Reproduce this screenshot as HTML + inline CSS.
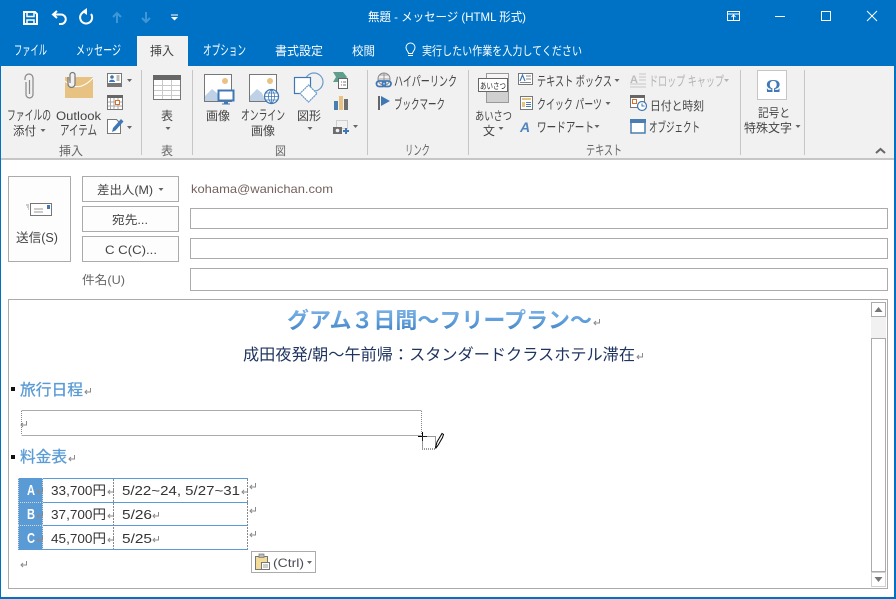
<!DOCTYPE html>
<html lang="ja"><head><meta charset="utf-8"><title>無題 - メッセージ (HTML 形式)</title>
<style>
html,body{margin:0;padding:0;background:#fff;overflow:hidden}
svg{display:block;position:absolute;left:0;top:0}
text{font-family:"Liberation Sans","Noto Sans CJK JP",sans-serif;font-size:12px;fill:#444;white-space:pre}
text.k{font-size:13.500px}
</style></head><body>
<svg width="896" height="599" viewBox="0 0 896 599" xmlns="http://www.w3.org/2000/svg">
<defs>
<g id="r"><path d="M6.500 0v4H1M3 2L1 4l2 2" fill="none" stroke="#8a8a8a" stroke-width="1"/></g>
<path id="a" d="M-2.500 0h5L0 3z" fill="#666"/>
<linearGradient id="tg" x1="0" y1="0" x2="0" y2="1"><stop offset="0" stop-color="#7fb3e4"/><stop offset=".5" stop-color="#5f9fdc"/><stop offset="1" stop-color="#3f7fc0"/></linearGradient>
</defs>
<rect width="896" height="599" fill="#0072c6"/>
<rect x="1" y="66" width="893" height="531" fill="#fff"/>
<rect x="1" y="66" width="893" height="92" fill="#f1f1f1"/>
<rect x="1" y="158" width="893" height="2" fill="#c6c6c6"/>
<rect x="137" y="36" width="51" height="30" fill="#f1f1f1"/>

<!-- QAT -->
<g fill="none" stroke="#fff">
<path d="M24 12h11l2 2v10H24z" stroke-width="2"/><path d="M27 12.500v4h7v-4M27 24v-4h7v4" stroke-width="1.500"/>
<path d="M57 11l-4 3.500 4 3.500" stroke-width="2"/><path d="M53.500 14.500H61a4.500 4.500 0 0 1 0 9.500h-2" stroke-width="2"/>
<path d="M91 14a6 6 0 1 1-5-2.500" stroke-width="2"/>
</g>
<path d="M87 8v7l-5-3.500z" fill="#fff"/>
<g fill="none" stroke="#3f96d6" stroke-width="2"><path d="M117 23V13M113 17l4-4 4 4M146 12v10M142 18l4 4 4-4"/></g>
<path d="M171 14.500h7v1h-7zM171 17h7l-3.500 3.500z" fill="#fff"/>

<text x="368" y="21" textLength="158" lengthAdjust="spacingAndGlyphs" style="fill:#fff">無題 - メッセージ (HTML 形式)</text>

<!-- window controls -->
<g fill="none" stroke="#fff">
<path d="M727.500 11.500h12v9h-12zM727.500 14h12M733.500 20v-5M731.500 17l2-2 2 2"/>
<path d="M775 16.500h10M821.500 11.500h9v9h-9zM867 11l10 10M877 11l-10 10"/>
</g>

<!-- tabs -->
<text class="k" style="fill:#fff" x="14" y="55" textLength="33" lengthAdjust="spacingAndGlyphs">ファイル</text>
<text class="k" style="fill:#fff" x="76" y="55" textLength="45" lengthAdjust="spacingAndGlyphs">メッセージ</text>
<text x="150" y="55" textLength="24" lengthAdjust="spacingAndGlyphs" style="fill:#444">挿入</text>
<text class="k" style="fill:#fff" x="203" y="55" textLength="43" lengthAdjust="spacingAndGlyphs">オプション</text>
<text style="fill:#fff" x="275" y="55" textLength="48" lengthAdjust="spacingAndGlyphs">書式設定</text>
<text style="fill:#fff" x="352" y="55" textLength="23" lengthAdjust="spacingAndGlyphs">校閲</text>
<text style="fill:#fff" x="422" y="55" textLength="160" lengthAdjust="spacingAndGlyphs">実行したい作業を入力してください</text>
<path d="M408 55.500h5M408.500 53.500c0-2-2.500-3-2.500-6a4.500 4.500 0 0 1 9 0c0 3-2.500 4-2.500 6z" fill="none" stroke="#fff"/>

<!-- separators -->
<g fill="#c6c6c6">
<rect x="141" y="70" width="1" height="85"/><rect x="192" y="70" width="1" height="85"/><rect x="367" y="70" width="1" height="85"/><rect x="468" y="70" width="1" height="85"/><rect x="740" y="70" width="1" height="85"/><rect x="804" y="70" width="1" height="85"/>
</g>

<!-- ribbon text -->
<text class="k" x="7" y="120" textLength="44" lengthAdjust="spacingAndGlyphs">ファイルの</text>
<text x="13" y="135" textLength="23" lengthAdjust="spacingAndGlyphs">添付</text>
<use href="#a" x="43" y="129"/>
<text x="56" y="120" textLength="45" lengthAdjust="spacingAndGlyphs">Outlook</text>
<text class="k" x="60" y="135" textLength="37" lengthAdjust="spacingAndGlyphs">アイテム</text>
<text x="161" y="120" textLength="12" lengthAdjust="spacingAndGlyphs">表</text>
<use href="#a" x="168" y="127"/>
<text x="206" y="120" textLength="24" lengthAdjust="spacingAndGlyphs">画像</text>
<text class="k" x="241" y="120" textLength="44" lengthAdjust="spacingAndGlyphs">オンライン</text>
<text x="251" y="135" textLength="24" lengthAdjust="spacingAndGlyphs">画像</text>
<text x="297" y="120" textLength="24" lengthAdjust="spacingAndGlyphs">図形</text>
<use href="#a" x="310" y="127"/>
<text class="k" x="394" y="86" textLength="63" lengthAdjust="spacingAndGlyphs">ハイパーリンク</text>
<text class="k" x="394" y="109" textLength="51" lengthAdjust="spacingAndGlyphs">ブックマーク</text>
<text x="475" y="120" textLength="37" lengthAdjust="spacingAndGlyphs">あいさつ</text>
<text x="483" y="135" textLength="12" lengthAdjust="spacingAndGlyphs">文</text>
<use href="#a" x="501" y="127"/>
<text class="k" x="537" y="86" textLength="75" lengthAdjust="spacingAndGlyphs">テキスト ボックス</text>
<use href="#a" x="617" y="79"/>
<text class="k" x="537" y="109" textLength="65" lengthAdjust="spacingAndGlyphs">クイック パーツ</text>
<use href="#a" x="608" y="102"/>
<text class="k" x="537" y="132" textLength="57" lengthAdjust="spacingAndGlyphs">ワードアート</text>
<use href="#a" x="597" y="125"/>
<text class="k" x="649" y="86" textLength="75" lengthAdjust="spacingAndGlyphs" style="fill:#b4b4b4">ドロップ キャップ</text>
<path d="M-2.500 0h5L0 3z" transform="translate(726.500 79)" fill="#b4b4b4"/>
<text x="650" y="110" textLength="54" lengthAdjust="spacingAndGlyphs">日付と時刻</text>
<text class="k" x="649" y="132" textLength="51" lengthAdjust="spacingAndGlyphs">オブジェクト</text>
<text x="758" y="117" textLength="32" lengthAdjust="spacingAndGlyphs">記号と</text>
<text x="744" y="132" textLength="48" lengthAdjust="spacingAndGlyphs">特殊文字</text>
<use href="#a" x="798" y="125"/>
<text x="59" y="155" textLength="24" lengthAdjust="spacingAndGlyphs" style="fill:#666">挿入</text>
<text x="161" y="155" textLength="12" lengthAdjust="spacingAndGlyphs" style="fill:#666">表</text>
<text x="275" y="155" textLength="11" lengthAdjust="spacingAndGlyphs" style="fill:#666">図</text>
<text class="k" x="405" y="155" textLength="25" lengthAdjust="spacingAndGlyphs" style="fill:#666">リンク</text>
<text class="k" x="586" y="155" textLength="36" lengthAdjust="spacingAndGlyphs" style="fill:#666">テキスト</text>
<path d="M876 153l4.500-4 4.500 4" fill="none" stroke="#666" stroke-width="2"/>

<!-- ribbon icons -->
<path d="M26 82v12.500a3.500 3.500 0 0 0 7 0V78a4 4 0 0 0-8 0v2M29.500 80v14" fill="none" stroke="#888" stroke-width="1.200"/>
<rect x="65" y="77" width="28" height="21" fill="#e8c283"/>
<path d="M65 81c8 8 18 8 28-3" fill="none" stroke="#fff" stroke-width="1"/>
<path d="M68 77v7a3.500 3.500 0 0 0 7 0v-9a2.500 2.500 0 0 0-5 0v8" fill="#f1f1f1" stroke="#777" stroke-width="1.200"/>
<!-- card -->
<rect x="107.500" y="73.500" width="14" height="10" fill="#fff" stroke="#777"/>
<rect x="107" y="83" width="15" height="4" fill="#777"/>
<circle cx="112" cy="77" r="1.800" fill="#3f78b5"/><path d="M109 82c0-3 6-3 6 0z" fill="#3f78b5"/><path d="M116.500 76h3M116.500 78h3M116.500 80h3" stroke="#777" fill="none"/>
<use href="#a" x="129.500" y="79"/>
<!-- calendar -->
<rect x="107.500" y="95.500" width="15" height="14" fill="#fff" stroke="#777"/>
<rect x="107" y="95" width="16" height="3" fill="#666"/>
<path d="M110.500 98v11M114 98v11M118 98v11M108 102h14M108 106h14" stroke="#aaa" fill="none"/>
<rect x="115.500" y="100.500" width="4" height="4" fill="#fff" stroke="#d4722c"/>
<!-- doc pen -->
<path d="M107.500 119.500h9l4 4v10h-13z" fill="#fff" stroke="#777"/>
<path d="M112 132l1-4 8-9 2.500 2.500-8 9z" fill="#3f78b5"/>
<use href="#a" x="129.500" y="126"/>
<!-- table -->
<rect x="153.500" y="75.500" width="27" height="24" fill="#fff" stroke="#777"/>
<rect x="153" y="75" width="28" height="5" fill="#666"/>
<path d="M162.500 80v19M171.500 80v19M154 85.500h26M154 90.500h26M154 95.500h26" stroke="#c9c9c9" fill="none"/>
<!-- picture -->
<rect x="204.500" y="74.500" width="27" height="27" fill="#fff" stroke="#777"/>
<circle cx="225" cy="81" r="3" fill="#e8c283"/>
<path d="M205 101V96l7-7 5 4 3 8z" fill="#bfd1e6"/>
<rect x="218.500" y="90.500" width="15" height="10" fill="#fff" stroke="#3f78b5" stroke-width="2"/>
<path d="M224 102h4v1.500h2v1h-8v-1h2z" fill="#3f78b5"/>
<!-- online picture -->
<rect x="249.500" y="74.500" width="27" height="27" fill="#fff" stroke="#777"/>
<circle cx="270" cy="81" r="3" fill="#e8c283"/>
<path d="M250 101V96l7-7 5 4 3 8z" fill="#bfd1e6"/>
<circle cx="271.500" cy="96.500" r="7" fill="#fff" stroke="#3f78b5" stroke-width="1.300"/>
<path d="M264.500 96.500h14M265.500 93h12M265.500 100h12M271.500 89.500v14M271.500 89.500c-4 4-4 10 0 14M271.500 89.500c4 4 4 10 0 14" stroke="#3f78b5" fill="none" stroke-width=".8"/>
<!-- shapes -->
<circle cx="314" cy="82" r="9" fill="none" stroke="#6a9bcb" stroke-width="1.200"/>
<rect x="294.500" y="77.500" width="16" height="16" fill="#fff" stroke="#3f78b5" stroke-width="1.200"/>
<path d="M308.500 85l8.500 8.500-8.500 8.500-8.500-8.500z" fill="#fff" stroke="#6a9bcb" stroke-width="1.200" stroke-dasharray="2 .5"/>
<!-- right chart icons -->
<path d="M333 72h10l4 5-4 5h-10l3-5z" fill="#5f9e8c"/>
<rect x="338.500" y="78.500" width="9" height="10" fill="#fff" stroke="#666"/>
<path d="M341 82h1M343 82h3M341 85h1M343 85h3" stroke="#777" fill="none"/>
<rect x="334" y="101" width="4" height="9" fill="#4a7db0"/><rect x="339" y="96" width="4" height="14" fill="#e8c283"/><rect x="344" y="99" width="4" height="11" fill="#6d6d6d"/>
<rect x="336.500" y="120.500" width="11" height="8" fill="none" stroke="#aaa" stroke-dasharray="1 1"/>
<rect x="333" y="127" width="9" height="7" fill="#6d6d6d"/><circle cx="337.500" cy="130.500" r="1.800" fill="#f1f1f1"/>
<path d="M345 128h2v2h2v2h-2v2h-2v-2h-2v-2h2z" fill="#3f78b5"/>
<use href="#a" x="355.500" y="125"/>
<!-- hyperlink -->
<circle cx="384" cy="79" r="6" fill="none" stroke="#888"/><path d="M378 79h12M384 73v10M380 75h8" stroke="#888" fill="none" stroke-width=".8"/>
<rect x="376.500" y="81" width="9" height="5.500" rx="2.700" fill="none" stroke="#3f78b5" stroke-width="1.800"/><rect x="382.500" y="81" width="8.500" height="5.500" rx="2.700" fill="none" stroke="#3f78b5" stroke-width="1.800"/>
<!-- bookmark -->
<rect x="378" y="96" width="2" height="14" fill="#666"/>
<path d="M381 96l9 5-9 5z" fill="#3f78b5"/>
<!-- greeting -->
<rect x="486.500" y="73.500" width="22" height="29" fill="#f6f6f6" stroke="#999"/>
<rect x="487" y="91" width="21" height="11" fill="#d0d0d0"/>
<rect x="478.500" y="78.500" width="29" height="13" fill="#fff" stroke="#666"/>
<text x="480" y="89" textLength="26" lengthAdjust="spacingAndGlyphs" style="font-size:8.500px;fill:#333">あいさつ</text>
<!-- text box -->
<rect x="518.500" y="73.500" width="14" height="11" fill="#fff" stroke="#777"/>
<path d="M520 81l2.500-6 2.500 6" fill="none" stroke="#3f78b5" stroke-width="1.200"/><path d="M526 76h5M526 79h5M520 82.500h11" stroke="#888" fill="none"/>
<!-- quick parts -->
<rect x="520.500" y="96.500" width="12" height="13" fill="#fff" stroke="#777"/>
<rect x="522" y="98" width="9" height="2" fill="#e8c283"/><rect x="522" y="102" width="3" height="5" fill="#e8c283"/><path d="M526 102.500h5M526 104.500h5M526 106.500h5" stroke="#4a7db0" fill="none"/>
<!-- wordart -->
<text x="520" y="132" style="font-size:14px;font-weight:bold;font-style:italic;fill:#4f86c0">A</text>
<!-- drop cap -->
<text x="630" y="83" style="font-size:11px;font-weight:bold;fill:#bbb">A</text>
<path d="M639 74h7M639 77h7M639 80h7M630 84h16M630 87h16" stroke="#c8c8c8" fill="none"/>
<!-- date -->
<rect x="630.500" y="95.500" width="14" height="12" fill="#fff" stroke="#777"/><rect x="630" y="95" width="15" height="3" fill="#666"/>
<rect x="632.500" y="99.500" width="4" height="4" fill="#fff" stroke="#d4722c"/>
<circle cx="642" cy="106" r="4.500" fill="#fff" stroke="#3f78b5" stroke-width="1.200"/><path d="M642 103.500V106h2.500" stroke="#3f78b5" fill="none"/>
<!-- object -->
<rect x="631" y="120" width="14" height="13" fill="#fff" stroke="#4a7db0" stroke-width="1.500"/><rect x="630" y="119" width="16" height="4" fill="#4a7db0"/>
<!-- omega -->
<rect x="757.500" y="70.500" width="29" height="29" fill="#fff" stroke="#c6c6c6"/>
<text x="766" y="92" style="font-family:'Liberation Serif',serif;font-size:18px;font-weight:bold;fill:#3f78b5">Ω</text>

<!-- form -->
<g fill="#fff" stroke="#ababab">
<rect x="8.500" y="176.500" width="62" height="85" fill="#fdfdfd"/>
<rect x="82.500" y="176.500" width="96" height="25" fill="#fdfdfd"/>
<rect x="82.500" y="206.500" width="96" height="25" fill="#fdfdfd"/>
<rect x="82.500" y="236.500" width="96" height="25" fill="#fdfdfd"/>
<rect x="190.500" y="208.500" width="697" height="20"/>
<rect x="190.500" y="238.500" width="697" height="20"/>
<rect x="190.500" y="268.500" width="697" height="22"/>
<rect x="8.500" y="299.500" width="879" height="289"/>
</g>
<rect x="30.500" y="203.500" width="21" height="12" fill="#fff" stroke="#777"/>
<path d="M34 209h9M34 212h9M26 205h3M27 207h2M28 209h1" stroke="#999" fill="none"/>
<rect x="47" y="205" width="3" height="4" fill="#3f78b5"/>
<text x="16" y="242" textLength="42" lengthAdjust="spacingAndGlyphs" style="font-size:12.500px">送信(S)</text>
<text x="97" y="194" textLength="56" lengthAdjust="spacingAndGlyphs">差出人(M)</text>
<use href="#a" x="161" y="188"/>
<text x="112" y="224" textLength="36" lengthAdjust="spacingAndGlyphs">宛先...</text>
<text x="105" y="254" textLength="52" lengthAdjust="spacingAndGlyphs">C C(C)...</text>
<text x="191" y="193" textLength="142" lengthAdjust="spacingAndGlyphs" style="fill:#75625e">kohama@wanichan.com</text>
<text x="82" y="284" textLength="43" lengthAdjust="spacingAndGlyphs" style="fill:#666">件名(U)</text>

<!-- scrollbar -->
<rect x="871" y="302" width="15" height="285" fill="#f1f1f1"/>
<rect x="871.500" y="302.500" width="14" height="14" fill="#fff" stroke="#ababab"/>
<path d="M874.500 312h8L878.500 307z" fill="#777"/>
<rect x="871.500" y="338.500" width="14" height="233" fill="#fff" stroke="#ababab"/>
<rect x="871.500" y="572.500" width="14" height="14" fill="#fff" stroke="#d0d0d0"/>
<path d="M874.500 577h8l-4 5z" fill="#777"/>

<!-- body -->
<text x="287" y="328" textLength="305" lengthAdjust="spacingAndGlyphs" style="font-size:22px;font-weight:bold;fill:url(#tg)">グアム３日間～フリープラン～</text>
<use href="#r" x="593" y="319"/>
<text x="243" y="360" textLength="392" lengthAdjust="spacingAndGlyphs" style="font-size:16px;fill:#1f3560">成田夜発/朝～午前帰：スタンダードクラスホテル滞在</text>
<use href="#r" x="636" y="353"/>
<rect x="11" y="387" width="4" height="4" fill="#111"/>
<text x="20" y="395" textLength="63" lengthAdjust="spacingAndGlyphs" style="font-size:15.500px;fill:#5b9bd5;stroke:#5b9bd5;stroke-width:.3px">旅行日程</text>
<use href="#r" x="84" y="388"/>
<path d="M21.500 410.500h400" stroke="#ababab" fill="none"/><path d="M21.500 435.500h400" stroke="#ababab" fill="none"/>
<path d="M21.500 411v24M421.500 411v24" stroke="#888" stroke-dasharray="1 1" fill="none"/>
<use href="#r" x="20" y="421"/>
<path d="M418 436.500h9M422.500 432v9" stroke="#000" fill="none"/>
<rect x="422.500" y="436.500" width="13" height="12.500" fill="none" stroke="#333" stroke-dasharray="1 1"/>
<path d="M435.500 448l1.500-6 5-8.500 1.500 1-1 3-4 7-2.500 3.500z" fill="#fff" stroke="#000"/>
<rect x="11" y="455" width="4" height="4" fill="#111"/>
<text x="20" y="462" textLength="47" lengthAdjust="spacingAndGlyphs" style="font-size:15.500px;fill:#5b9bd5;stroke:#5b9bd5;stroke-width:.3px">料金表</text>
<use href="#r" x="68" y="455"/>

<!-- table -->
<rect x="18" y="478" width="25" height="72" fill="#5b9bd5"/>
<path d="M43 478.500h205M43 502.500h205M43 525.500h205M43 549.500h205" stroke="#5b9bd5" fill="none"/>
<path d="M18 502.500h25M18 525.500h25M18.500 478v72M42.500 478v72" stroke="#d8d8d8" stroke-dasharray="1 1" fill="none"/>
<path d="M113.500 479v70M247.500 479v70" stroke="#888" stroke-dasharray="2 1" fill="none"/>
<text x="27" y="495" textLength="8" lengthAdjust="spacingAndGlyphs" style="font-size:15px;font-weight:bold;fill:#fff">A</text>
<text x="27" y="519" textLength="8" lengthAdjust="spacingAndGlyphs" style="font-size:15px;font-weight:bold;fill:#fff">B</text>
<text x="27" y="543" textLength="8" lengthAdjust="spacingAndGlyphs" style="font-size:15px;font-weight:bold;fill:#fff">C</text>
<text x="51" y="495" textLength="55" lengthAdjust="spacingAndGlyphs" style="font-size:13px;fill:#333">33,700円</text>
<text x="51" y="519" textLength="55" lengthAdjust="spacingAndGlyphs" style="font-size:13px;fill:#333">37,700円</text>
<text x="51" y="543" textLength="55" lengthAdjust="spacingAndGlyphs" style="font-size:13px;fill:#333">45,700円</text>
<text x="122" y="495" textLength="118" lengthAdjust="spacingAndGlyphs" style="font-size:13px;fill:#333">5/22~24, 5/27~31</text>
<text x="122" y="519" textLength="30" lengthAdjust="spacingAndGlyphs" style="font-size:13px;fill:#333">5/26</text>
<text x="122" y="543" textLength="30" lengthAdjust="spacingAndGlyphs" style="font-size:13px;fill:#333">5/25</text>
<use href="#r" x="36" y="488"/><use href="#r" x="36" y="512"/><use href="#r" x="36" y="536"/>
<use href="#r" x="107" y="488"/><use href="#r" x="107" y="512"/><use href="#r" x="107" y="536"/>
<use href="#r" x="241" y="488"/><use href="#r" x="152" y="512"/><use href="#r" x="152" y="536"/>
<use href="#r" x="249" y="483"/><use href="#r" x="249" y="507"/><use href="#r" x="249" y="531"/>
<use href="#r" x="20" y="561"/>

<!-- paste options -->
<rect x="251.500" y="551.500" width="64" height="21" fill="#fff" stroke="#ababab"/>
<rect x="255.500" y="556.500" width="12" height="13" fill="#f3dc9a" stroke="#777"/>
<rect x="259" y="554" width="5" height="3.500" fill="#bbb" stroke="#777" stroke-width=".7"/>
<rect x="261.500" y="562.500" width="8" height="7" fill="#fff" stroke="#777"/>
<path d="M263 565h5M263 567h5" stroke="#999" fill="none"/>
<text x="273" y="567" textLength="31" lengthAdjust="spacingAndGlyphs" style="fill:#4b4b55">(Ctrl)</text>
<use href="#a" x="309.500" y="561"/>
</svg>
</body></html>
